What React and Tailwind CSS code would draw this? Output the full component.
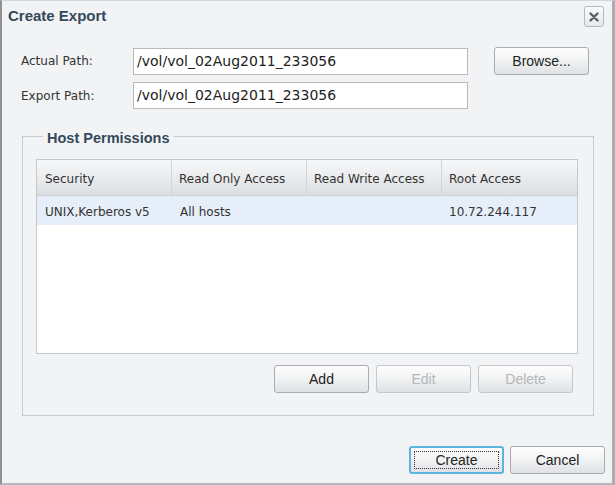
import React from "react";

const btn =
  "h-[28px] w-[95px] rounded-[3px] border bg-gradient-to-b from-[#fefefe] via-[#f1f2f3] to-[#dfe1e4] text-[14px] flex items-center justify-center";

export default function App() {
  const sans = { fontFamily: '"DejaVu Sans", sans-serif' };
  const arial = { fontFamily: '"Liberation Sans", Arial, sans-serif' };
  return (
    <div className="w-[615px] h-[485px] bg-[#f2f3f5] border-l-2 border-l-[#8e9195] border-t border-t-[#d3d6d9] border-r-[3px] border-r-[#a9acb0] border-b-2 border-b-[#b4b7bb] flex flex-col text-[#333]" style={sans}>
      {/* title bar */}
      <div className="h-[46px] flex items-start justify-between">
        <div className="pl-[6px] pt-[6px] text-[15px] leading-[18px] font-bold text-[#34495a]" style={arial}>
          Create Export
        </div>
        <div className="mt-[5px] mr-[8px] w-[20px] h-[21px] rounded-[3px] border border-[#b3b7bb] bg-gradient-to-b from-[#fbfbfc] to-[#e6e8ea] flex items-center justify-center">
          <svg width="10" height="10" viewBox="0 0 10 10">
            <path d="M1.5 1.5 L8.5 8.5 M8.5 1.5 L1.5 8.5" stroke="#56606a" strokeWidth="2.4" strokeLinecap="round" />
          </svg>
        </div>
      </div>

      {/* path rows */}
      <div className="flex items-center h-[28px] pl-[19px]">
        <div className="w-[112px] text-[12px]">Actual Path:</div>
        <div className="w-[335px] h-[27px] border border-[#b7b9bc] bg-white flex items-center pl-[3px] text-[14px] text-[#222]">
          /vol/vol_02Aug2011_233056
        </div>
        <button className={btn + " ml-[26px] w-[87px] border-[#a8acb1] text-[#222]"} style={arial}>
          Browse...
        </button>
      </div>
      <div className="flex items-center h-[27px] mt-[7px] pl-[19px]">
        <div className="w-[112px] text-[12px]">Export Path:</div>
        <div className="w-[335px] h-[27px] border border-[#b7b9bc] bg-white flex items-center pl-[3px] text-[14px] text-[#222]">
          /vol/vol_02Aug2011_233056
        </div>
      </div>

      {/* group box */}
      <fieldset className="ml-[20px] mt-[18px] w-[572px] border border-[#c8cbcf] pl-[13px] pr-[14px] pt-[14px] pb-[22px]">
        <legend className="ml-[7px] px-[4px] text-[14.5px] leading-[18px] font-bold text-[#34495a]" style={arial}>
          <span className="relative top-[2px]">Host Permissions</span>
        </legend>
        <div className="w-[542px] h-[195px] border border-[#c4c7cb] bg-white flex flex-col">
          <div className="h-[36px] flex bg-gradient-to-b from-[#f7f8f9] to-[#dcdfe2] border-b border-[#cfd2d5] text-[12px]">
            <div className="w-[135px] border-r border-[#d2d5d8] flex items-center pt-[3px] pl-[8px]">Security</div>
            <div className="w-[135px] border-r border-[#d2d5d8] flex items-center pt-[3px] pl-[7px]">Read Only Access</div>
            <div className="w-[135px] border-r border-[#d2d5d8] flex items-center pt-[3px] pl-[7px]">Read Write Access</div>
            <div className="flex-1 flex items-center pt-[3px] pl-[7px]">Root Access</div>
          </div>
          <div className="h-[29px] flex bg-[#e6eff9] text-[12px]">
            <div className="w-[135px] flex items-center pt-[3px] pl-[8px]">UNIX,Kerberos v5</div>
            <div className="w-[135px] flex items-center pt-[3px] pl-[8px]">All hosts</div>
            <div className="w-[135px] flex items-center pt-[3px] pl-[8px]"></div>
            <div className="flex-1 flex items-center pt-[3px] pl-[7px]">10.72.244.117</div>
          </div>
        </div>
        <div className="mt-[11px] flex justify-end gap-[7px] pr-[6px]" style={arial}>
          <button className={btn + " border-[#a8acb1] text-[#222]"}>Add</button>
          <button className={btn + " border-[#c4c7cb] text-[#b4b7ba]"}>Edit</button>
          <button className={btn + " border-[#c4c7cb] text-[#b4b7ba]"}>Delete</button>
        </div>
      </fieldset>

      {/* bottom buttons */}
      <div className="mt-[30px] flex justify-end gap-[6px] pr-[7px]" style={arial}>
        <button className={btn + " border-2 border-[#5cb6de] text-[#222] p-[3px]"}>
          <span className="w-full h-full border border-dotted border-[#333] flex items-center justify-center">Create</span>
        </button>
        <button className={btn + " border-[#a8acb1] text-[#222]"}>Cancel</button>
      </div>
    </div>
  );
}
